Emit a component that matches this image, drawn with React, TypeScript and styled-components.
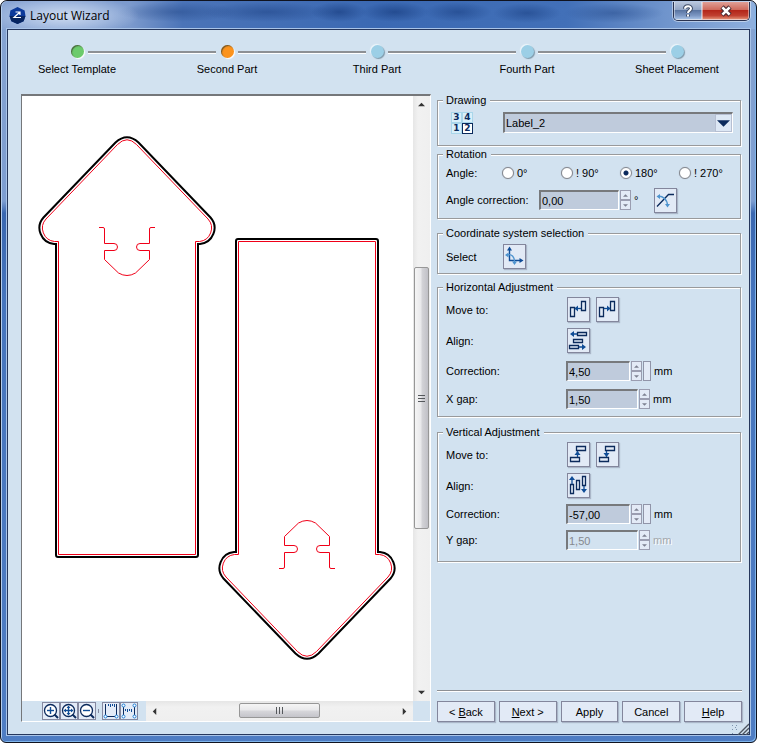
import React from "react";
import styled, { createGlobalStyle, css } from "styled-components";

const NAVY = "#0b2a5c";
const BLUE = "#0f4c96";
const SKY = "#4f94cf";
const FACE = "#d2e2f0";

const GlobalStyle = createGlobalStyle`
  * { box-sizing: border-box; }
  html, body { margin: 0; background: #fff; }
  body, button, input, select {
    font-family: "Liberation Sans", Arial, sans-serif;
    font-size: 11px;
    line-height: 14px;
    color: #000;
  }
  svg { display: block; }
`;

/* ---------- window frame ---------- */

const Window = styled.div`
  min-height: 100vh;
  display: flex;
  flex-direction: column;
  padding: 0 6px 7px;
  border: 1px solid #10131f;
  border-radius: 7px 7px 6px 6px;
  box-shadow: inset 1px 1px 0 #b5cdeb, inset -1px -1px 0 #7fb4ea;
  background: linear-gradient(180deg, #86a4d2 0, #7d9dd0 200px, #3a67b0 212px, #4675bd 300px, #4f7dc3 100%);
`;

const TitleBar = styled.header`
  height: 28px;
  margin: 0 -5px;
  padding: 1px 5px 0 7px;
  display: flex;
  align-items: flex-start;
  border-radius: 6px 6px 0 0;
  background:
    radial-gradient(ellipse 75px 20px at 62px 15px, rgba(214, 226, 244, 0.9), rgba(190, 208, 236, 0.55) 60%, transparent),
    radial-gradient(ellipse 60px 10px at 175px 11px, rgba(30, 66, 130, 0.45), transparent),
    radial-gradient(ellipse 65px 10px at 265px 11px, rgba(26, 62, 128, 0.5), transparent),
    radial-gradient(ellipse 28px 10px at 337px 11px, rgba(20, 56, 122, 0.6), transparent),
    radial-gradient(ellipse 34px 10px at 393px 11px, rgba(20, 56, 122, 0.6), transparent),
    radial-gradient(ellipse 34px 10px at 456px 11px, rgba(20, 56, 122, 0.5), transparent),
    radial-gradient(ellipse 34px 10px at 525px 12px, rgba(20, 56, 122, 0.5), transparent),
    radial-gradient(ellipse 50px 10px at 612px 12px, rgba(30, 66, 130, 0.45), transparent),
    linear-gradient(90deg, #8aa6d4 0, #7c9acd 17%, #4b74b8 24%, #3b69b3 50%, #4270b8 75%, #6f94cc 88%, #8fb0de 100%);
`;

const AppTitle = styled.h1`
  flex: 1;
  display: flex;
  align-items: center;
  gap: 4px;
  margin: 5px 0 0;
  font: 12px/16px "Open Sans", "Noto Sans", sans-serif;
`;

const CaptionButtons = styled.div`
  display: flex;
  border: 1px solid #2a3350;
  border-top: 0;
  border-radius: 0 0 5px 5px;
  overflow: hidden;
  box-shadow: 0 0 0 1px rgba(255, 255, 255, 0.45);
`;

const CaptionButton = styled.button<{ $close?: boolean }>`
  width: ${(p) => (p.$close ? 47 : 28)}px;
  height: 18px;
  padding: 0;
  display: grid;
  place-items: center;
  border: 1px solid rgba(255, 255, 255, 0.45);
  border-top: 0;
  background: ${(p) =>
    p.$close
      ? "linear-gradient(#e0a097 0, #cf6a5c 45%, #b3261a 50%, #c04030 80%, #e08a70)"
      : "linear-gradient(#b9c6dc 0, #92a5c5 45%, #5a75a2 50%, #7d98c4 80%, #a5c0e4)"};
`;

const Client = styled.main`
  flex: 1;
  display: flex;
  flex-direction: column;
  border: 1px solid #26375c;
  background: ${FACE};
  box-shadow: 0 0 0 1px #a9c4e8;
`;

/* ---------- wizard steps ---------- */

const Steps = styled.ol`
  list-style: none;
  margin: 0;
  padding: 15px 32px 0 29px;
  height: 63px;
  display: flex;
`;

const Step = styled.li`
  width: 80px;
  display: flex;
  flex-direction: column;
  align-items: center;
  gap: 4px;
  white-space: nowrap;
`;

const Dot = styled.span<{ $color: string; $flat?: boolean }>`
  width: 13px;
  height: 13px;
  border-radius: 50%;
  background: ${(p) => p.$color};
  box-shadow: ${(p) =>
    p.$flat
      ? "1px 1px 1px #7d97a8, -1px -1px 1px #eef6fb"
      : "inset 1px 1px 1px rgba(60, 60, 40, 0.7), 1px 1px 1px #fff"};
`;

const Connector = styled.li`
  flex: 1;
  height: 3px;
  margin: 6px -29px 0;
  border-top: 2px solid #8d9094;
  border-bottom: 1px solid #fff;
`;

/* ---------- body ---------- */

const Body = styled.div`
  flex: 1;
  display: flex;
  gap: 6px;
  padding: 0 7px 12px 13px;
`;

const Preview = styled.section`
  flex: 1;
  min-width: 0;
  margin-top: 1px;
  display: grid;
  grid-template-columns: minmax(0, 1fr) 17px;
  grid-template-rows: minmax(0, 1fr) 20px;
  border: 1px solid #fff;
  border-top: 2px solid #75777a;
  border-left: 1px solid #75777a;
`;

const Canvas = styled.div`
  background: #fff;
  overflow: hidden;
  svg { width: 100%; height: 100%; }
`;

const VScroll = styled.div`
  display: flex;
  flex-direction: column;
  align-items: stretch;
  background: linear-gradient(90deg, #e6e6e6, #f1f1f1 30%, #efefef);
`;

const HScroll = styled.div`
  flex: 1;
  min-width: 0;
  display: flex;
  background: linear-gradient(#e6e6e6, #f1f1f1 30%, #efefef);
`;

const ScrollArrow = styled.button`
  flex: 0 0 17px;
  padding: 0;
  border: 0;
  background: none;
  display: grid;
  place-items: center;
`;

const Track = styled.div<{ $grow: number }>`
  flex: ${(p) => p.$grow} 1 0;
`;

const Thumb = styled.div<{ $grow: number; $vertical?: boolean }>`
  flex: ${(p) => p.$grow} 1 0;
  display: grid;
  place-items: center;
  border: 1px solid #979797;
  border-radius: 2px;
  ${(p) =>
    p.$vertical
      ? css`
          margin: 0 1px;
          background: linear-gradient(90deg, #f5f5f5, #e9e9eb 45%, #d3d3d7 55%, #c0c0c6);
        `
      : css`
          margin: 2px 0 3px;
          background: linear-gradient(#f5f5f5, #e9e9eb 45%, #d6d6da 55%, #c4c4ca);
        `}
`;

const BottomBar = styled.div`
  display: flex;
  min-width: 0;
`;

const Tools = styled.div`
  flex: 0 0 124px;
  display: flex;
  align-items: center;
  padding-left: 20px;
`;

const ToolButton = styled.button`
  width: 18px;
  height: 18px;
  padding: 0;
  border: 1px solid #8589a0;
  background: #e3ebf7;
`;

const ToolGap = styled.span`
  width: 1px;
  height: 4px;
  margin: 0 3px 0 2px;
  background: #8589a0;
`;

/* ---------- settings ---------- */

const Side = styled.div`
  flex: 0 0 305px;
  min-width: 0;
  display: flex;
  flex-direction: column;
`;

const Group = styled.fieldset<{ $gap?: number; $end?: number }>`
  min-width: 0;
  margin: ${(p) => p.$gap ?? 0}px 1px 0 0;
  padding: 0 7px ${(p) => p.$end ?? 0}px 8px;
  border: 1px solid #999a9c;
  box-shadow: 1px 1px 0 #fff, inset 1px 1px 0 #fff;
`;

const Legend = styled.legend`
  margin-left: -3px;
  padding: 0 4px 0 3px;
  background: ${FACE};
`;

const Row = styled.div<{ $h: number }>`
  height: ${(p) => p.$h}px;
  display: flex;
  align-items: center;
  white-space: nowrap;
`;

const Caption = styled.span<{ $w: number }>`
  flex: 0 0 ${(p) => p.$w}px;
`;

const CaptionLabel = styled.label<{ $w: number }>`
  flex: 0 0 ${(p) => p.$w}px;
`;

const Unit = styled.span<{ $disabled?: boolean }>`
  margin-left: 3px;
  ${(p) =>
    p.$disabled &&
    css`
      color: #a3a8ad;
      text-shadow: 1px 1px 0 #fff;
    `}
`;

const sunken = css`
  border: 1px solid #fff;
  border-top: 2px solid #77797c;
  border-left: 2px solid #77797c;
  border-radius: 0;
  background: #bfcbdc;
`;

const Field = styled.input<{ $w: number }>`
  ${sunken}
  width: ${(p) => p.$w}px;
  height: 20px;
  padding: 0 1px;
  outline: 0;
  &:disabled {
    background: ${FACE};
    color: #85898e;
  }
`;

const Spinner = styled.span`
  width: 11px;
  margin-left: 1px;
  display: flex;
  flex-direction: column;
`;

const SpinButton = styled.button`
  height: 10px;
  padding: 0;
  display: grid;
  place-items: center;
  border: 1px solid #9a9db0;
  background: #e3eaf6;
`;

const DragBar = styled.button`
  width: 8px;
  height: 20px;
  margin-left: 1px;
  padding: 0;
  border: 1px solid #9094a8;
  background: #e3eaf6;
`;

const raised = css`
  border: 1px solid #83869c;
  border-radius: 0;
  background: #e2eaf6;
  box-shadow: 1px 1px 1px #aab6c8;
`;

const IconButton = styled.button<{ $gap?: number }>`
  ${raised}
  width: 23px;
  height: 25px;
  margin-left: ${(p) => p.$gap ?? 0}px;
  padding: 0;
`;

const RadioLabel = styled.label`
  flex: 0 0 59px;
  display: flex;
  align-items: center;
  gap: 3px;
  &:last-child { flex: 1; min-width: 0; }
`;

const Radio = styled.input`
  appearance: none;
  flex: none;
  width: 12px;
  height: 12px;
  margin: 0;
  border: 1px solid #83878f;
  border-radius: 50%;
  background: #fff;
  box-shadow: 0 0 1px #9aa2ac;
  &:checked {
    background: radial-gradient(circle at center, ${NAVY} 2px, #fff 3px);
  }
`;

const Cells = styled.div`
  width: 51px;
  padding-left: 6px;
  display: grid;
  grid-template-columns: 9px 9px;
  grid-auto-rows: 9px;
  gap: 2px;
`;

const Cell = styled.span<{ $on?: boolean }>`
  font: bold 9px/9px "DejaVu Sans", sans-serif;
  text-align: center;
  color: ${NAVY};
  background: ${(p) => (p.$on ? "#fff" : "#d8effa")};
  box-shadow: 0 0 0 1px ${(p) => (p.$on ? NAVY : "#a9d6ea")};
`;

const SelectBox = styled.div`
  position: relative;
  flex: 1;
  display: flex;
`;

const Select = styled.select`
  ${sunken}
  appearance: none;
  width: 100%;
  height: 21px;
  padding: 0 20px 0 1px;
  outline: 0;
`;

const SelectArrow = styled.span`
  position: absolute;
  top: 2px;
  right: 1px;
  width: 17px;
  height: 18px;
  display: grid;
  place-items: center;
  border: 1px solid #b6bfd2;
  background: #dde8f5;
  pointer-events: none;
`;

const Footer = styled.footer`
  margin-top: auto;
  display: grid;
  grid-template-columns: repeat(5, 1fr);
  gap: 9px 4px;
`;

const Rule = styled.hr`
  grid-column: 1 / -1;
  width: 100%;
  height: 2px;
  margin: 0;
  border: 0;
  border-top: 1px solid #8d9094;
  border-bottom: 1px solid #fff;
`;

const PushButton = styled.button`
  ${raised}
  height: 21px;
  padding: 0;
`;

const Grip = styled.div`
  position: absolute;
  right: 8px;
  bottom: 8px;
`;

const Shell = styled.div`
  position: relative;
`;

/* ---------- icons ---------- */

const Logo = () => (
  <svg width="17" height="17" viewBox="0 0 17 17">
    <path d="M8.5 0 15.6 3.4 16.5 9 14.6 14.2 8.5 17 2.4 14.2 0.5 9 1.4 3.4Z" fill="#0c3a9a" />
    <path d="M0.5 9 2.4 14.2 8.5 17 14.6 14.2 16.5 9Z" fill="#072560" />
    <path d="M6.500 5H11V8M11 5 5 10.500H12" fill="none" stroke="#fff" strokeWidth="1.200" />
  </svg>
);

const HelpGlyph = () => (
  <svg width="12" height="14" viewBox="0 0 12 14" fill="none">
    <path d="M3 4.8C3 1.4 9 1.4 9 4.6 9 6.8 6 6.6 6 9M6 10.4V12.6" stroke="#3f4c66" strokeWidth="4" />
    <path d="M3 4.8C3 1.4 9 1.4 9 4.6 9 6.8 6 6.6 6 9M6 10.4V12.6" stroke="#fff" strokeWidth="2" />
  </svg>
);

const CloseGlyph = () => (
  <svg width="14" height="12" viewBox="0 0 14 12" fill="none">
    <path d="M3 2 11 10M11 2 3 10" stroke="#4a2c34" strokeWidth="4.6" />
    <path d="M3.4 2.4 10.6 9.6M10.6 2.4 3.4 9.6" stroke="#fff" strokeWidth="2.6" />
  </svg>
);

const Triangle = ({ dir, size = 7, color = "#333" }: { dir: "up" | "down" | "left" | "right"; size?: number; color?: string }) => {
  const paths = { up: "M0 6 4 2 8 6Z", down: "M0 2 4 6 8 2Z", left: "M6 0 2 4 6 8Z", right: "M2 0 6 4 2 8Z" };
  return (
    <svg width={size} height={size} viewBox="0 0 8 8">
      <path d={paths[dir]} fill={color} />
    </svg>
  );
};

const GripLines = ({ vertical }: { vertical?: boolean }) => (
  <svg width="9" height="9" viewBox="0 0 9 9" shapeRendering="crispEdges">
    <path
      d={vertical ? "M1 1.5H8M1 4.5H8M1 7.5H8" : "M1.5 1V8M4.5 1V8M7.5 1V8"}
      stroke="#55585c"
    />
  </svg>
);

const Glyph = ({ children }: { children: React.ReactNode }) => (
  <svg width="21" height="23" viewBox="1 1 21 23" fill="none">
    {children}
  </svg>
);

const MoveHIcon = ({ right }: { right?: boolean }) => (
  <Glyph>
    <path d="M3.5 10.5H7.5V19.5H3.5ZM14.5 4.5H18.5V13.5H14.5Z" stroke={NAVY} strokeWidth="1.300" />
    <path d="M8 11.5H14" stroke={BLUE} strokeWidth="1.300" />
    <path d={right ? "M14.5 11.5 11 8.5V14.5Z" : "M7.5 11.5 11 8.5V14.5Z"} fill={BLUE} />
  </Glyph>
);

const AlignHIcon = () => (
  <Glyph>
    <path d="M10.5 4.5H19.5V7.5H10.5ZM6.5 11.5H15.5V14.5H6.5ZM2.5 17.5H11.5V20.5H2.5Z" stroke={NAVY} strokeWidth="1.300" />
    <path d="M5 6H10M12 19H17" stroke={BLUE} strokeWidth="1.300" />
    <path d="M3 6 7 3V9ZM19 19 15 16V22Z" fill={BLUE} />
  </Glyph>
);

const MoveVIcon = ({ down }: { down?: boolean }) => (
  <Glyph>
    <path d="M9.5 4.5H18.5V8.5H9.5ZM3.5 15.5H12.5V19.5H3.5Z" stroke={NAVY} strokeWidth="1.300" />
    <path d="M10.5 9V15" stroke={BLUE} strokeWidth="1.300" />
    <path d={down ? "M10.5 15 7.5 11H13.5Z" : "M10.5 9 7.5 13H13.5Z"} fill={BLUE} />
  </Glyph>
);

const AlignVIcon = () => (
  <Glyph>
    <path d="M3.5 11.5H6.5V20.5H3.5ZM9.5 7.5H12.5V16.5H9.5ZM15.5 3.5H18.5V12.5H15.5Z" stroke={NAVY} strokeWidth="1.300" />
    <path d="M5 6V11M17 13V17" stroke={BLUE} strokeWidth="1.300" />
    <path d="M5 3 2 7H8ZM17 20 14 16H20Z" fill={BLUE} />
  </Glyph>
);

const AxesIcon = () => (
  <Glyph>
    <path d="M6.5 5V16.5H18" stroke={BLUE} strokeWidth="1.4" />
    <path d="M6.5 2.5 4 6.5H9ZM20.5 16.5 16.5 14V19Z" fill={BLUE} />
    <path d="M3.5 11C9 9.500 12 13 11.500 19" stroke={SKY} strokeWidth="1.4" />
    <path d="M2 11 5.500 8.500V13.500ZM11.500 21 9 17.500H14Z" fill={SKY} />
  </Glyph>
);

const AngleIcon = () => (
  <Glyph>
    <path d="M3 18.500 14.500 6.500H20" stroke={NAVY} strokeWidth="1.300" />
    <path d="M4 8.500C8 7.500 13 11 13.500 17" stroke={SKY} strokeWidth="1.400" />
    <path d="M2.500 8.500 6 6V11ZM13.500 19.500 11 16H16Z" fill={SKY} />
  </Glyph>
);

const ToolIcon = ({ kind }: { kind: "in" | "fit" | "out" | "width" | "span" }) => (
  <svg width="16" height="16" viewBox="0 0 16 16" fill="none">
    {(kind === "in" || kind === "fit" || kind === "out") && (
      <>
        <circle cx="7.500" cy="7.500" r="6" stroke={NAVY} strokeWidth="1.300" fill="#fff" />
        <path d="M11.500 11.500 15 15" stroke={NAVY} strokeWidth="2" />
        <path d="M4 7.500H11" stroke={BLUE} strokeWidth="1.400" />
      </>
    )}
    {(kind === "in" || kind === "fit") && <path d="M7.500 4V11" stroke={BLUE} strokeWidth="1.400" />}
    {kind === "fit" && (
      <path d="M7.500 2.500 5.500 5H9.500ZM7.500 12.500 5.500 10H9.500ZM2.500 7.500 5 5.500V9.500ZM12.500 7.500 10 5.500V9.500Z" fill={BLUE} />
    )}
    {kind === "width" && (
      <>
        <path d="M2.500 1V13.500H13.500V1" stroke={NAVY} />
        <path d="M5.500 1V3M7.500 1V4M9.500 1V3M11.500 1V4" stroke={BLUE} />
        <circle cx="2.500" cy="13.500" r="1.500" stroke="#1f7fd6" fill="#fff" />
        <circle cx="13.500" cy="13.500" r="1.500" stroke="#1f7fd6" fill="#fff" />
      </>
    )}
    {kind === "span" && (
      <>
        <path d="M2.500 3V13M13.500 3V13" stroke={NAVY} />
        <path d="M4.500 6V8M6.500 6V9M8.500 6V8M10.500 6V9" stroke={BLUE} />
        {[2.5, 13.5].map((x) =>
          [2.5, 13.5].map((y) => <circle key={`${x}-${y}`} cx={x} cy={y} r="1.500" stroke="#1f7fd6" fill="#fff" />)
        )}
      </>
    )}
  </svg>
);

const GripIcon = () => (
  <svg width="18" height="12" viewBox="0 0 18 12">
    <path d="M1 2.500H8M1 6.500H6M1 10.500H4M4 4.500H8" stroke="#7d93ad" strokeDasharray="1 3" />
    <path d="M7 12 18 1M11 12 18 5M15 12 18 9" stroke="#4d5560" strokeWidth="1.400" />
  </svg>
);

/* ---------- drawing ---------- */

const Part = () => (
  <g fill="none">
    <path
      d="M56 555V244H54A16 16 0 0 1 43.500 217.500L115.500 142.500Q127 132 138.500 142.500L210.500 217.500A16 16 0 0 1 200 244H198V555Q198 557 196 557H58Q56 557 56 555Z"
      stroke="#000"
      strokeWidth="2"
    />
    <path
      d="M58.500 554.500V241.500H54.500A13.500 13.500 0 0 1 46 219L117.500 144.500Q127 135 136.500 144.500L208 219A13.500 13.500 0 0 1 199.500 241.500H195.500V554.500Z"
      stroke="#f00018"
    />
    <path
      d="M99 227.500H103Q104.500 227.500 104.500 229V243.500H114A3.500 3.500 0 0 1 114 250.500H104.500V259.500L118.500 273Q127 278 135.500 273L149.500 259.500V250.500H140A3.500 3.500 0 0 1 140 243.500H149.500V229Q149.500 227.500 151 227.500H155"
      stroke="#f00018"
    />
  </g>
);

/* ---------- composite controls ---------- */

const SpinPair = ({ disabled }: { disabled?: boolean }) => (
  <Spinner>
    <SpinButton type="button" aria-label="Increase" disabled={disabled}>
      <Triangle dir="up" size={5} color="#7c8090" />
    </SpinButton>
    <SpinButton type="button" aria-label="Decrease" disabled={disabled}>
      <Triangle dir="down" size={5} color="#7c8090" />
    </SpinButton>
  </Spinner>
);

const Adjustment = ({
  id, title, gap, end, fieldRow, moveIcons, alignIcon, correction, gapLabel, gapValue, gapDisabled,
}: {
  id: string;
  title: string;
  gap: number;
  end: number;
  fieldRow: number;
  moveIcons: React.ReactNode[];
  alignIcon: React.ReactNode;
  correction: string;
  gapLabel: string;
  gapValue: string;
  gapDisabled?: boolean;
}) => (
  <Group $gap={gap} $end={end}>
    <Legend>{title}</Legend>
    <Row $h={31}>
      <Caption $w={121}>Move to:</Caption>
      {moveIcons.map((icon, i) => (
        <IconButton key={i} $gap={i ? 6 : 0} type="button" aria-label={i ? "Move to end" : "Move to start"}>
          {icon}
        </IconButton>
      ))}
    </Row>
    <Row $h={31}>
      <Caption $w={121}>Align:</Caption>
      <IconButton type="button" aria-label="Align">{alignIcon}</IconButton>
    </Row>
    <Row $h={fieldRow}>
      <CaptionLabel $w={120} htmlFor={`${id}-correction`}>Correction:</CaptionLabel>
      <Field $w={64} id={`${id}-correction`} defaultValue={correction} />
      <SpinPair />
      <DragBar type="button" aria-label="Drag to adjust" />
      <Unit>mm</Unit>
    </Row>
    <Row $h={26}>
      <CaptionLabel $w={120} htmlFor={`${id}-gap`}>{gapLabel}</CaptionLabel>
      <Field $w={72} id={`${id}-gap`} defaultValue={gapValue} disabled={gapDisabled} />
      <SpinPair disabled={gapDisabled} />
      <Unit $disabled={gapDisabled}>mm</Unit>
    </Row>
  </Group>
);

const STEPS = [
  { name: "Select Template", color: "#6ccb6c" },
  { name: "Second Part", color: "#fb931d" },
  { name: "Third Part", color: "#9ccfe6", flat: true },
  { name: "Fourth Part", color: "#9ccfe6", flat: true },
  { name: "Sheet Placement", color: "#9ccfe6", flat: true },
];

const ANGLES = ["0°", "! 90°", "180°", "! 270°"];

export default function App() {
  return (
    <Shell>
      <GlobalStyle />
      <Window>
        <TitleBar>
          <AppTitle>
            <Logo />
            Layout Wizard
          </AppTitle>
          <CaptionButtons>
            <CaptionButton type="button" aria-label="Help"><HelpGlyph /></CaptionButton>
            <CaptionButton type="button" aria-label="Close" $close><CloseGlyph /></CaptionButton>
          </CaptionButtons>
        </TitleBar>
        <Client>
          <Steps>
            {STEPS.map((s, i) => (
              <React.Fragment key={s.name}>
                {i > 0 && <Connector aria-hidden="true" />}
                <Step>
                  <Dot $color={s.color} $flat={s.flat} />
                  {s.name}
                </Step>
              </React.Fragment>
            ))}
          </Steps>
          <Body>
            <Preview>
              <Canvas>
                <svg viewBox="22 96 391 605">
                  <Part />
                  <g transform="rotate(180 217 398)"><Part /></g>
                </svg>
              </Canvas>
              <VScroll>
                <ScrollArrow type="button" aria-label="Scroll up"><Triangle dir="up" /></ScrollArrow>
                <Track $grow={155} />
                <Thumb $grow={260} $vertical><GripLines vertical /></Thumb>
                <Track $grow={156} />
                <ScrollArrow type="button" aria-label="Scroll down"><Triangle dir="down" /></ScrollArrow>
              </VScroll>
              <BottomBar>
                <Tools>
                  <ToolButton type="button" aria-label="Zoom in"><ToolIcon kind="in" /></ToolButton>
                  <ToolButton type="button" aria-label="Zoom to fit"><ToolIcon kind="fit" /></ToolButton>
                  <ToolButton type="button" aria-label="Zoom out"><ToolIcon kind="out" /></ToolButton>
                  <ToolGap />
                  <ToolButton type="button" aria-label="Show dimensions"><ToolIcon kind="width" /></ToolButton>
                  <ToolButton type="button" aria-label="Measure distance"><ToolIcon kind="span" /></ToolButton>
                </Tools>
                <HScroll>
                  <ScrollArrow type="button" aria-label="Scroll left"><Triangle dir="left" /></ScrollArrow>
                  <Track $grow={77} />
                  <Thumb $grow={79}><GripLines /></Thumb>
                  <Track $grow={77} />
                  <ScrollArrow type="button" aria-label="Scroll right"><Triangle dir="right" /></ScrollArrow>
                </HScroll>
              </BottomBar>
            </Preview>

            <Side>
              <Group $end={7}>
                <Legend>Drawing</Legend>
                <Row $h={31}>
                  <Cells aria-hidden="true">
                    <Cell>3</Cell>
                    <Cell>4</Cell>
                    <Cell>1</Cell>
                    <Cell $on>2</Cell>
                  </Cells>
                  <Caption $w={6} />
                  <SelectBox>
                    <Select aria-label="Drawing" defaultValue="Label_2">
                      <option>Label_2</option>
                    </Select>
                    <SelectArrow><Triangle dir="down" size={13} color={NAVY} /></SelectArrow>
                  </SelectBox>
                </Row>
              </Group>

              <Group $gap={1} $end={3}>
                <Legend>Rotation</Legend>
                <Row $h={24}>
                  <Caption $w={56}>Angle:</Caption>
                  {ANGLES.map((a) => (
                    <RadioLabel key={a}>
                      <Radio type="radio" name="angle" defaultChecked={a === "180°"} />
                      {a}
                    </RadioLabel>
                  ))}
                </Row>
                <Row $h={30}>
                  <CaptionLabel $w={93} htmlFor="angle-correction">Angle correction:</CaptionLabel>
                  <Field $w={80} id="angle-correction" defaultValue="0,00" />
                  <SpinPair />
                  <Unit>°</Unit>
                  <IconButton $gap={16} type="button" aria-label="Pick angle"><AngleIcon /></IconButton>
                </Row>
              </Group>

              <Group $gap={7}>
                <Legend>Coordinate system selection</Legend>
                <Row $h={33}>
                  <Caption $w={57}>Select</Caption>
                  <IconButton type="button" aria-label="Select coordinate system"><AxesIcon /></IconButton>
                </Row>
              </Group>

              <Adjustment
                id="horizontal"
                title="Horizontal Adjustment"
                gap={6}
                end={4}
                fieldRow={30}
                moveIcons={[<MoveHIcon />, <MoveHIcon right />]}
                alignIcon={<AlignHIcon />}
                correction="4,50"
                gapLabel="X gap:"
                gapValue="1,50"
              />
              <Adjustment
                id="vertical"
                title="Vertical Adjustment"
                gap={8}
                end={8}
                fieldRow={26}
                moveIcons={[<MoveVIcon />, <MoveVIcon down />]}
                alignIcon={<AlignVIcon />}
                correction="-57,00"
                gapLabel="Y gap:"
                gapValue="1,50"
                gapDisabled
              />

              <Footer>
                <Rule />
                <PushButton type="button">&lt; <u>B</u>ack</PushButton>
                <PushButton type="button"><u>N</u>ext &gt;</PushButton>
                <PushButton type="button">Apply</PushButton>
                <PushButton type="button">Cancel</PushButton>
                <PushButton type="button"><u>H</u>elp</PushButton>
              </Footer>
            </Side>
          </Body>
        </Client>
      </Window>
      <Grip><GripIcon /></Grip>
    </Shell>
  );
}
